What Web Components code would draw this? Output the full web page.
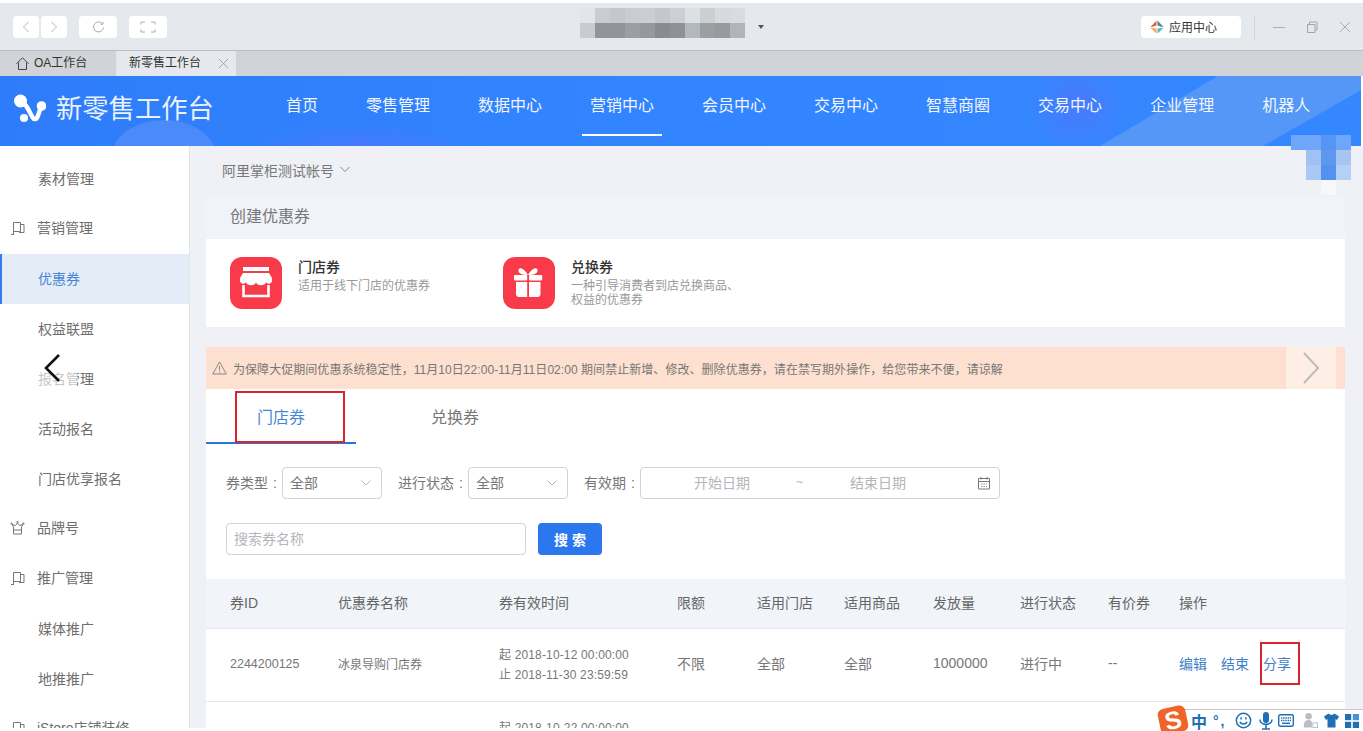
<!DOCTYPE html>
<html lang="zh-CN">
<head>
<meta charset="utf-8">
<title>新零售工作台</title>
<style>
  html, body { margin: 0; height: 100%; overflow: hidden; background: #fff; }
  body { font-family: "Liberation Sans", "Noto Sans CJK SC", sans-serif; color: #666; }
  app-shell { width: 1363px; height: 731px; }
</style>
</head>
<body>
<app-shell>
  <browser-bar slot="top"></browser-bar>
  <tab-strip slot="top"></tab-strip>
  <site-header slot="top"></site-header>

  <side-menu slot="side">
    <menu-item>素材管理</menu-item>
    <menu-item icon="flag">营销管理</menu-item>
    <menu-item active>优惠券</menu-item>
    <menu-item>权益联盟</menu-item>
    <menu-item>报名管理</menu-item>
    <menu-item>活动报名</menu-item>
    <menu-item>门店优享报名</menu-item>
    <menu-item icon="crown">品牌号</menu-item>
    <menu-item icon="flag">推广管理</menu-item>
    <menu-item>媒体推广</menu-item>
    <menu-item>地推推广</menu-item>
    <menu-item icon="flag">iStore店铺装修</menu-item>
  </side-menu>

  <account-line>阿里掌柜测试帐号</account-line>
  <create-panel>
    <coupon-card kind="shop" name="门店券">适用于线下门店的优惠券</coupon-card>
    <coupon-card kind="gift" name="兑换券">一种引导消费者到店兑换商品、<br>权益的优惠券</coupon-card>
  </create-panel>
  <notice-bar>为保障大促期间优惠系统稳定性，11月10日22:00-11月11日02:00 期间禁止新增、修改、删除优惠券，请在禁写期外操作，给您带来不便，请谅解</notice-bar>
  <coupon-list></coupon-list>
</app-shell>

<script>
class BaseEl extends HTMLElement {
  constructor() {
    super();
    this._shadow = this.attachShadow({ mode: "open" });
  }
  connectedCallback() { this._shadow.innerHTML = this.render(); }
}

class AppShell extends BaseEl {
  render() {
    return `
      <style>
        :host { display: block; position: relative; overflow: hidden; }
        .top { display: block; }
        .body { display: flex; height: 582px; background: #eff1f6; overflow: hidden; }
        .main { flex: 1; min-width: 0; padding: 0 18px 0 16px; }
        .back { position: absolute; left: 27px; top: 347px; width: 50px; height: 42px;
                background: rgba(255,255,255,.6); display: flex; align-items: center; justify-content: center; }
        .blur { position: absolute; left: 1291px; top: 135px; display: grid;
                grid-template-columns: repeat(4, 15px); grid-auto-rows: 15px; }
      </style>
      <div class="top"><slot name="top"></slot></div>
      <div class="body">
        <slot name="side"></slot>
        <div class="main"><slot></slot></div>
      </div>
      <div class="back">
        <svg width="18" height="30" viewBox="0 0 18 30" fill="none">
          <path d="M16 2 L3 15 L16 28" stroke="#111" stroke-width="2.6"/>
        </svg>
      </div>
      <div class="blur">
        ${["#6ea6fa","#6ea6fa","#5795f5","#6da6fb",
           "transparent","#a0c1f2","#5d98ee","#a6c5f2",
           "transparent","#a9c8f4","#5592ef","#b6cff4",
           "transparent","transparent","#f6f8fb","transparent"]
          .map(c => `<i style="background:${c}"></i>`).join("")}
      </div>
      <ime-bar></ime-bar>
    `;
  }
}

class BrowserBar extends BaseEl {
  render() {
    const top = ["#e2e6ea","#c9cdd2","#c4c8cc","#c9cdd2","#cbcfd3","#c4c8cc","#ccd0d4","#dbe0e5","#cccfd2","#d6dade","#d8dce0"];
    const low = ["#c8cccf","#919498","#909397","#9b9ea2","#95999d","#898b8f","#8f9195","#b3b8bf","#9c9ea2","#989b9e","#b0b5b8"];
    return `
      <style>
        :host { display: flex; align-items: center; height: 47px; margin-top: 3px; padding-left: 13px;
                background: #e5e9ed; box-sizing: border-box; position: relative; }
        .btn { height: 22px; background: #fff; border-radius: 4px; display: flex;
               align-items: center; justify-content: center; margin-top: 1px; }
        .s { width: 26px; margin-right: 2px; }
        .m { width: 38px; }
        .title { display: grid; grid-template-columns: repeat(11, 15px); grid-auto-rows: 15px;
                 margin-left: 413px; align-self: flex-start; padding-top: 5px; }
        .caret { width: 0; height: 0; border: 3px solid transparent; border-top: 4px solid #555;
                 border-bottom: 0; margin-left: 13px; margin-top: 1px; }
        .app { width: 100px; margin-left: 377px; justify-content: flex-start; gap: 5px; font-size: 12px;
               color: #333; padding: 0 0 1px 9px; box-sizing: border-box; }
        .sep { width: 1px; height: 25px; background: #d3d7db; margin: 1px 0 0 13px; }
        .win { display: flex; margin-left: 17px; gap: 19px; margin-top: 1px; }
      </style>
      <div class="btn s"><svg width="10" height="12" viewBox="0 0 10 12" fill="none"><path d="M7.5 1 L2.5 6 L7.5 11" stroke="#b4b8bc"/></svg></div>
      <div class="btn s"><svg width="10" height="12" viewBox="0 0 10 12" fill="none"><path d="M2.5 1 L7.5 6 L2.5 11" stroke="#b4b8bc"/></svg></div>
      <div class="btn m" style="margin-left:10px"><svg width="13" height="13" viewBox="0 0 13 13" fill="none"><path d="M10.6 3 A5 5 0 1 0 11.5 6.5 M8.5 3.2 H11 V0.8" stroke="#a9adb1"/></svg></div>
      <div class="btn m" style="margin-left:12px"><svg width="16" height="12" viewBox="0 0 16 12" fill="none"><path d="M5 1 H1 V3.5 M11 1 H15 V3.5 M1 8.5 V11 H5 M15 8.5 V11 H11" stroke="#a9adb1"/></svg></div>
      <div class="title">
        ${top.concat(low).map(c => `<i style="background:${c}"></i>`).join("")}
      </div>
      <div class="caret"></div>
      <div class="btn app">
        <svg width="14" height="14" viewBox="0 0 14 14">
          <path d="M6.5 .5 V5.5 L2 7 H.5 Z" fill="#e4604c"/>
          <path d="M7.5 .5 L13.5 7 H12 L7.5 5.5 Z" fill="#3f8e8c"/>
          <path d="M.5 8 H2 L6.5 8.5 V13.5 Z" fill="#eeae4e"/>
          <path d="M7.5 8.5 L13.5 8 L7.5 13.5 Z" fill="#5bb3c6"/>
        </svg>
        <span>应用中心</span>
      </div>
      <div class="sep"></div>
      <div class="win">
        <svg width="14" height="14" viewBox="0 0 14 14" fill="none"><path d="M1 7.5 H13" stroke="#aaaeb2"/></svg>
        <svg width="14" height="14" viewBox="0 0 14 14" fill="none"><path d="M2.5 4.5 H10 V12.5 H2.5 Z M4.5 4 V2 H12 V10 H10.5" stroke="#a2a6aa"/></svg>
        <svg width="14" height="14" viewBox="0 0 14 14" fill="none"><path d="M2 2 L12 12 M12 2 L2 12" stroke="#aaaeb2"/></svg>
      </div>
    `;
  }
}

class TabStrip extends BaseEl {
  render() {
    return `
      <style>
        :host { display: flex; height: 26px; background: #d0d4d8; border-top: 1px solid #babec2;
                box-sizing: border-box; font-size: 12px; color: #333; line-height: 22px; }
        .tab { display: flex; align-items: center; height: 25px; box-sizing: border-box; padding-bottom: 2px; }
        .home { width: 117px; padding-left: 16px; gap: 5px; border-right: 1px solid #e2e5e8; }
        .cur { width: 119px; background: #e5e9ed; padding-left: 12px; }
        .x { margin-left: 17px; margin-top: 2px; }
        .home svg { margin-top: 2px; }
      </style>
      <div class="tab home">
        <svg width="13" height="13" viewBox="0 0 13 13" fill="none"><path d="M.5 6.8 L6.5 .8 L12.5 6.8 M2.5 5.5 V12.5 H10.5 V5.5" stroke="#444"/></svg>
        <span>OA工作台</span>
      </div>
      <div class="tab cur">
        <span>新零售工作台</span>
        <svg class="x" width="11" height="11" viewBox="0 0 11 11" fill="none"><path d="M1 1 L10 10 M10 1 L1 10" stroke="#a5a9ad"/></svg>
      </div>
    `;
  }
}

class SiteHeader extends BaseEl {
  render() {
    const items = ["首页","零售管理","数据中心","营销中心","会员中心","交易中心","智慧商圈","交易中心","企业管理","机器人"];
    return `
      <style>
        :host { display: flex; align-items: stretch; height: 70px; width: 1361px; position: relative; overflow: hidden;
                background: linear-gradient(90deg, #2e7cf9, #3385ff 50%, #3587ff); color: #fff; }
        .deco { position: absolute; left: 0; top: 0; }
        .logo { position: relative; display: flex; align-items: center; width: 262px; padding: 0 0 4px 14px;
                box-sizing: border-box; gap: 10px; }
        .name { font-size: 26.3px; color: #e9f1ff; white-space: nowrap; line-height: 36px; font-weight: 400; }
        nav { position: relative; display: flex; }
        a { position: relative; padding: 0 24px; font-size: 16px; line-height: 59px; white-space: nowrap; color: #f2f6ff; }
        a.on::after { content: ""; position: absolute; left: 16px; right: 16px; top: 58px; height: 2px; background: #fff; }
      </style>
      <svg class="deco" width="1361" height="70" viewBox="0 0 1361 70">
        <defs>
          <radialGradient id="p"><stop offset="0" stop-color="#4b78fb" stop-opacity=".85"/><stop offset="1" stop-color="#4b78fb" stop-opacity="0"/></radialGradient>
        </defs>
        <ellipse cx="360" cy="72" rx="110" ry="24" fill="url(#p)"/>
        <ellipse cx="1078" cy="30" rx="50" ry="50" fill="url(#p)"/>
        <ellipse cx="164" cy="80" rx="52" ry="36" fill="#4a8af9"/>
        <path d="M1100 70 L1218 0 H1361 V14 L1263 70 Z" fill="#5597f7"/>
      </svg>
      <div class="logo">
        <svg width="32" height="30" viewBox="0 0 32 30" fill="#fff">
          <circle cx="6.5" cy="7" r="6.5"/>
          <circle cx="10" cy="24" r="4"/>
          <circle cx="27.5" cy="12" r="4.8"/>
          <path d="M9 9 C14 12 15 18 19 24 C20 26 23 25 23.5 23 L27 13" fill="none" stroke="#fff" stroke-width="4.4" stroke-linecap="round"/>
        </svg>
        <span class="name">新零售工作台</span>
      </div>
      <nav>${items.map((t, i) => `<a class="${i === 3 ? "on" : ""}">${t}</a>`).join("")}</nav>
    `;
  }
}

class SideMenu extends BaseEl {
  render() {
    return `
      <style>
        :host { display: block; width: 190px; flex: none; box-sizing: border-box; background: #fff;
                border-right: 1px solid #dfe3ea; padding-top: 8px; }
      </style>
      <slot></slot>
    `;
  }
}

const MENU_ICONS = {
  flag: `<path d="M3.5 1.5 V13.5 M1 13.5 H4 M3.5 1.5 H10.5 V10.5 H3.5 M10.5 3.5 H14 V11.5 H9" fill="none" stroke="#777"/>`,
  crown: `<path d="M3.5 6 L2 3.5 L5.5 4.5 L7.5 2 L9.5 4.5 L13 3.5 L11.5 6 V13 H3.5 Z M3.5 9 H11.5" fill="none" stroke="#777"/><circle cx="1.5" cy="2.5" r="1" fill="#777"/><circle cx="13.5" cy="2.5" r="1" fill="#777"/><circle cx="7.5" cy="1" r="1" fill="#777"/>`
};

class MenuItem extends BaseEl {
  render() {
    const icon = this.getAttribute("icon");
    return `
      <style>
        :host { display: flex; align-items: center; height: 50px; box-sizing: border-box; font-size: 14px;
                color: #6e6e6e; padding: 0 0 2px 38px; position: relative; white-space: nowrap; }
        :host([icon]) { padding: 0 0 4px 37px; }
        :host([active]) { background: #e3ecf7; color: #4a86d6; border-left: 2px solid #2f7df0; padding-left: 36px; }
        svg { position: absolute; left: 10px; top: 17px; }
      </style>
      ${icon ? `<svg width="16" height="15" viewBox="0 0 16 15">${MENU_ICONS[icon]}</svg>` : ""}
      <slot></slot>
    `;
  }
}

class AccountLine extends BaseEl {
  render() {
    return `
      <style>
        :host { display: flex; align-items: center; height: 50px; padding: 0 0 3px 16px; box-sizing: border-box;
                font-size: 14px; color: #777; gap: 6px; }
      </style>
      <slot></slot>
      <svg width="10" height="7" viewBox="0 0 10 7" fill="none"><path d="M.5 1 L5 5.5 L9.5 1" stroke="#888"/></svg>
    `;
  }
}

class CreatePanel extends BaseEl {
  render() {
    return `
      <style>
        :host { display: block; }
        h2 { margin: 0; height: 43px; line-height: 42px; padding-left: 24px; font-size: 16px; font-weight: 400;
             color: #777; background: #f0f3f9; }
        .cards { display: flex; height: 88px; background: #fff; padding: 18px 0 0 24px; box-sizing: border-box; }
      </style>
      <h2>创建优惠券</h2>
      <div class="cards"><slot></slot></div>
    `;
  }
}

const CARD_ICONS = {
  shop: `<path d="M13 10 H39 V14 H13 Z" fill="#fff"/>
         <path d="M13 16 H39 L42 21 V24 A3.2 3.2 0 0 1 36 25 A5 3.2 0 0 1 26 25 A5 3.2 0 0 1 16 25 A3.2 3.2 0 0 1 10 24 V21 Z" fill="#fff"/>
         <path d="M13.5 28 V39 H38.5 V28" fill="none" stroke="#fff" stroke-width="2.6"/>`,
  gift: `<path d="M25 18 C20 10 15 10 15.5 14 C16 17 20 18 25 18 C30 18 34 17 34.5 14 C35 10 30 10 25 18 Z" fill="#fff"/>
         <rect x="11" y="18" width="13.2" height="5.5" rx="1" fill="#fff"/>
         <rect x="26" y="18" width="13.2" height="5.5" rx="1" fill="#fff"/>
         <path d="M13 25 H24.2 V40 H16 A3 3 0 0 1 13 37 Z" fill="#fff"/>
         <path d="M26 25 H37.5 V37 A3 3 0 0 1 34.5 40 H26 Z" fill="#fff"/>`
};

class CouponCard extends BaseEl {
  render() {
    return `
      <style>
        :host { display: flex; width: 273px; gap: 16px; }
        .ic { width: 52px; height: 52px; border-radius: 12px; background: #f93a4a; flex: none; }
        b { display: block; font-size: 14px; line-height: 20px; color: #333; font-weight: 500; }
        p { margin: 2px 0 0; font-size: 12px; line-height: 14px; color: #999; white-space: nowrap; }
      </style>
      <svg class="ic" viewBox="0 0 52 52">${CARD_ICONS[this.getAttribute("kind")]}</svg>
      <div>
        <b>${this.getAttribute("name")}</b>
        <p><slot></slot></p>
      </div>
    `;
  }
}

class NoticeBar extends BaseEl {
  render() {
    return `
      <style>
        :host { display: flex; align-items: center; height: 42px; margin-top: 20px; background: #fde0cf; position: relative;
                font-size: 12px; color: #777; padding-left: 6px; gap: 6px; white-space: nowrap; letter-spacing: .05px; }
        .next { position: absolute; right: 9px; top: 0; width: 50px; height: 42px; background: #feeee4;
                display: flex; align-items: center; justify-content: center; }
      </style>
      <svg width="15" height="14" viewBox="0 0 15 14" fill="none">
        <path d="M7.5 1 L14.3 13 H.7 Z" stroke="#888" stroke-linejoin="round"/>
        <path d="M7.5 5 V9.5 M7.5 10.5 V11.7" stroke="#888"/>
      </svg>
      <span><slot></slot></span>
      <div class="next">
        <svg width="18" height="32" viewBox="0 0 18 32" fill="none"><path d="M2 1 L16 16 L2 31" stroke="#b9bcbf" stroke-width="2"/></svg>
      </div>
    `;
  }
}

class FilterSelect extends BaseEl {
  render() {
    return `
      <style>
        :host { display: flex; align-items: center; justify-content: space-between; width: 100px; height: 32px;
                box-sizing: border-box; border: 1px solid #cfd2d6; border-radius: 4px; padding: 0 10px 2px 7px;
                font-size: 14px; color: #777; background: #fff; }
        svg { margin-top: 2px; }
      </style>
      <span>全部</span>
      <svg width="10" height="6" viewBox="0 0 10 6" fill="none"><path d="M.5 .5 L5 5 L9.5 .5" stroke="#b5b8bc"/></svg>
    `;
  }
}

class DateRange extends BaseEl {
  render() {
    return `
      <style>
        :host { display: flex; align-items: center; width: 360px; height: 32px; box-sizing: border-box;
                border: 1px solid #cfd2d6; border-radius: 4px; font-size: 14px; color: #b4b6ba;
                padding: 0 0 2px 53px; background: #fff; position: relative; }
        .sep { margin: 0 0 0 46px; width: 54px; font-size: 12px; }
        svg { position: absolute; right: 8px; top: 8px; }
      </style>
      <span>开始日期</span><span class="sep">~</span><span>结束日期</span>
      <svg width="14" height="14" viewBox="0 0 14 14" fill="none">
        <path d="M1.5 2.5 H12.5 V13 H1.5 Z M1.5 5.5 H12.5 M4 .8 V3.5 M10 .8 V3.5" stroke="#777"/>
        <path d="M4 8 H10 M4 10.5 H10" stroke="#999" stroke-dasharray="1.5 1"/>
      </svg>
    `;
  }
}

class CouponList extends BaseEl {
  render() {
    const cols = ["券ID","优惠券名称","券有效时间","限额","适用门店","适用商品","发放量","进行状态","有价券","操作"];
    return `
      <style>
        :host { display: block; background: #fff; font-size: 14px; color: #777; }
        .tabs { display: flex; gap: 24px; height: 55px; position: relative; }
        .tab { width: 150px; height: 55px; box-sizing: border-box; text-align: center; font-size: 16px;
               line-height: 58px; color: #777; }
        .tab.on { color: #4a86d6; border-bottom: 2px solid #2a76d2; }
        .mark { position: absolute; left: 29px; top: 2px; width: 110px; height: 52px; box-sizing: border-box;
                border: 2px solid #d9232e; }
        .filters { display: flex; align-items: center; padding: 23px 0 0 20px; }
        .lbl { white-space: nowrap; padding-bottom: 2px; }
        .lbl i { display: inline-block; width: 14px; text-align: center; font-style: normal; }
        .gap { margin-left: 16px; }
        .search { display: flex; gap: 12px; padding: 24px 0 0 20px; }
        .input { width: 300px; height: 32px; box-sizing: border-box; border: 1px solid #cfd2d6; border-radius: 4px;
                 padding-left: 7px; line-height: 31px; color: #b4b6ba; }
        button { width: 64px; height: 32px; border: 0; border-radius: 4px; background: #2b78ee; color: #fff;
                 font: 700 14px "Liberation Sans", "Noto Sans CJK SC", sans-serif; padding: 0; }
        .head, .row { display: grid; grid-template-columns: 108px 161px 178px 80px 87px 89px 87px 88px 71px 1fr;
                      padding-left: 24px; align-items: center; box-sizing: border-box; }
        .head { height: 50px; margin-top: 24px; background: #f1f5f9; border-bottom: 1px solid #e4e8ee; color: #666;
                padding-bottom: 4px; }
        .row { height: 73px; border-bottom: 1px solid #e4e8ee; padding-bottom: 4px; }
        .sm { font-size: 12px; }
        .id { font-size: 12.5px; margin-top: 2px; }
        .time { font-size: 12px; line-height: 20px; white-space: nowrap; margin-top: 4px; letter-spacing: .15px; }
        .ops { display: flex; gap: 14px; color: #3f7fc8; }
        .ops span { position: relative; white-space: nowrap; }
        .ops i { position: absolute; left: -3px; top: -11px; width: 40px; height: 43px; box-sizing: border-box;
                 border: 2px solid #d9232e; }
      </style>
      <div class="tabs">
        <div class="tab on">门店券</div>
        <div class="tab">兑换券</div>
        <div class="mark"></div>
      </div>
      <div class="filters">
        <span class="lbl">券类型<i>:</i></span><filter-select></filter-select>
        <span class="lbl gap">进行状态<i>:</i></span><filter-select></filter-select>
        <span class="lbl gap">有效期<i>:</i></span><date-range></date-range>
      </div>
      <div class="search">
        <div class="input">搜索券名称</div>
        <button>搜 索</button>
      </div>
      <div class="head">${cols.map(c => `<span>${c}</span>`).join("")}</div>
      <div class="row">
        <span class="id">2244200125</span>
        <span class="sm">冰泉导购门店券</span>
        <span class="time">起 2018-10-12 00:00:00<br>止 2018-11-30 23:59:59</span>
        <span>不限</span><span>全部</span><span>全部</span><span>1000000</span><span>进行中</span><span>--</span>
        <div class="ops"><span>编辑</span><span>结束</span><span>分享<i></i></span></div>
      </div>
      <div class="row">
        <span></span><span></span>
        <span class="time">起 2018-10-22 00:00:00<br>止 2018-11-30 23:59:59</span>
      </div>
    `;
  }
}

class ImeBar extends BaseEl {
  render() {
    return `
      <style>
        :host { position: absolute; left: 1180px; top: 709px; width: 183px; height: 22px; background: #fff;
                border-top: 1px solid #c8c8c8; box-sizing: border-box; display: flex; align-items: center;
                padding-left: 11px; color: #1f6fb5; }
        .s { position: absolute; left: -21px; top: -3px; width: 28px; height: 26px; background: #ef6428; border-radius: 6px;
             transform: rotate(-12deg); color: #fff; font: 700 25px/26px "Liberation Sans", sans-serif; text-align: center; }
        b { font: 700 16px/20px "Noto Sans CJK SC", sans-serif; width: 16px; }
        .pt { font: 700 14px/16px "Liberation Sans", sans-serif; margin-left: 6px; width: 14px; white-space: nowrap; letter-spacing: 2px; }
        svg { flex: none; }
      </style>
      <span class="s">S</span>
      <b>中</b>
      <span class="pt">°,</span>
      <svg style="margin-left:8px" width="17" height="17" viewBox="0 0 18 18" fill="none" stroke="#1f6fb5" stroke-width="1.6">
        <circle cx="9" cy="9" r="7.6"/><path d="M5.2 10.5 C6.5 13.5 11.5 13.5 12.8 10.5"/><path d="M6.5 5.5 V8 M11.5 5.5 V8"/>
      </svg>
      <svg style="margin-left:7px" width="14" height="18" viewBox="0 0 14 18" fill="none">
        <rect x="4" y="0" width="6" height="11" rx="3" fill="#1f6fb5"/>
        <path d="M1 7.5 C1 14 13 14 13 7.5 M7 13 V17 M3 17 H11" stroke="#1f6fb5" stroke-width="1.6"/>
      </svg>
      <svg style="margin-left:5px" width="16" height="13" viewBox="0 0 16 13" fill="none">
        <rect x=".7" y=".7" width="14.6" height="11.6" rx="1.5" stroke="#1f6fb5" stroke-width="1.4"/>
        <path d="M3 4 H13 M3 6.5 H13" stroke="#1f6fb5" stroke-width="1.4" stroke-dasharray="1.4 .8"/>
        <path d="M4 9.3 H12" stroke="#1f6fb5" stroke-width="1.4"/>
      </svg>
      <svg style="margin-left:9px" width="15" height="17" viewBox="0 0 16 17">
        <circle cx="6" cy="4" r="3.5" fill="#b9bec4"/>
        <path d="M1 16 C0 10 3 8 6 8 C8 8 9 9 9.5 10 V16 Z" fill="#b9bec4"/>
        <rect x="10.5" y="11" width="5" height="5" fill="none" stroke="#b9bec4"/>
      </svg>
      <svg style="margin-left:6px" width="15" height="15" viewBox="0 0 15 15">
        <path d="M4.5 .5 C6 2.2 9 2.2 10.5 .5 L15 3.5 L13 7 L11.5 6 V14.5 H3.5 V6 L2 7 L0 3.5 Z" fill="#1f6fb5"/>
      </svg>
      <svg style="margin-left:6px" width="14" height="14" viewBox="0 0 14 14" fill="#1f6fb5">
        <rect width="6.2" height="6.2"/><rect x="7.8" width="6.2" height="6.2" fill="#4a93d0"/>
        <rect y="7.8" width="6.2" height="6.2"/><rect x="7.8" y="7.8" width="6.2" height="6.2"/>
      </svg>
    `;
  }
}

customElements.define("app-shell", AppShell);
customElements.define("browser-bar", BrowserBar);
customElements.define("tab-strip", TabStrip);
customElements.define("site-header", SiteHeader);
customElements.define("side-menu", SideMenu);
customElements.define("menu-item", MenuItem);
customElements.define("account-line", AccountLine);
customElements.define("create-panel", CreatePanel);
customElements.define("coupon-card", CouponCard);
customElements.define("notice-bar", NoticeBar);
customElements.define("filter-select", FilterSelect);
customElements.define("date-range", DateRange);
customElements.define("coupon-list", CouponList);
customElements.define("ime-bar", ImeBar);
</script>
</body>
</html>
